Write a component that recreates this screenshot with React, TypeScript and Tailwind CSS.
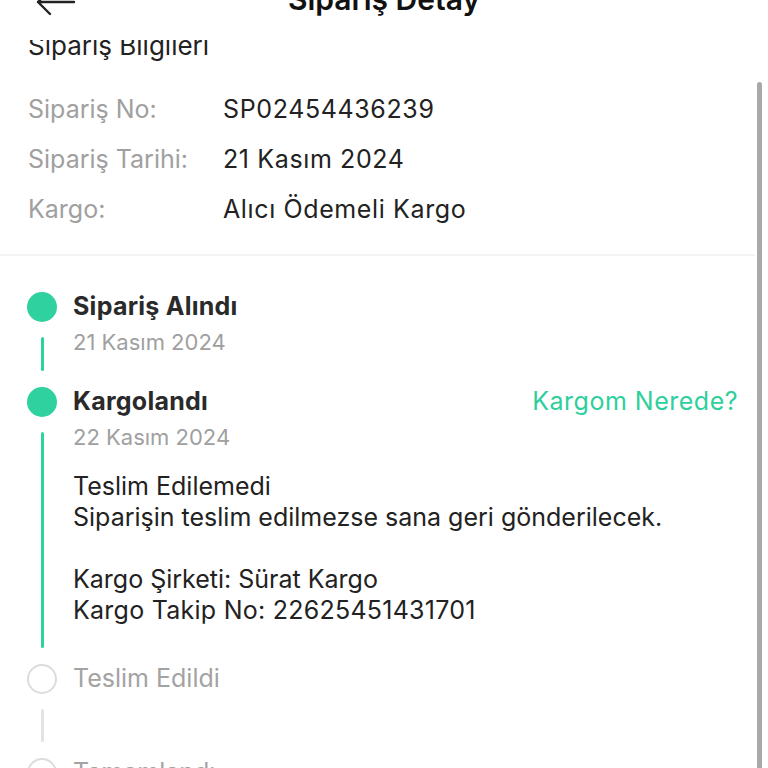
import React from "react";

const info = [
  { label: "Sipariş No:", value: "SP02454436239" },
  { label: "Sipariş Tarihi:", value: "21 Kasım 2024" },
  { label: "Kargo:", value: "Alıcı Ödemeli Kargo" },
];

function Dot({ active }: { active: boolean }) {
  return active ? (
    <span className="block h-[30px] w-[30px] shrink-0 rounded-full bg-[#2fd19e]" />
  ) : (
    <span className="block h-[30px] w-[30px] shrink-0 rounded-full border-2 border-[#dcdcdc] bg-white" />
  );
}

function Step({
  active,
  line,
  title,
  date,
  right,
  children,
  pad,
}: {
  active: boolean;
  line?: "green" | "gray";
  title: string;
  date?: string;
  right?: string;
  children?: React.ReactNode;
  pad?: string;
}) {
  return (
    <div className="flex gap-[16px]">
      <div className="flex w-[30px] flex-col items-center">
        <Dot active={active} />
        {line && (
          <span
            className={
              "mb-[16px] mt-[15px] w-[3px] flex-1 rounded-full " +
              (line === "green" ? "bg-[#2fd19e]" : "bg-[#e3e3e3]")
            }
          />
        )}
      </div>
      <div className={"flex-1 " + (pad ?? "")}>
        <div className="flex h-[30px] items-center justify-between">
          <span
            className={
              active
                ? "text-[25px] font-bold tracking-[0.01em] text-[#2a2a2a]"
                : "text-[25px] text-[#a3a3a3]"
            }
          >
            {title}
          </span>
          {right && <span className="text-[25px] tracking-[0.02em] text-[#2fcf9c]">{right}</span>}
        </div>
        {date && (
          <div className="mt-[6px] text-[22px] leading-[28px] text-[#a0a0a0]">{date}</div>
        )}
        {children}
      </div>
    </div>
  );
}

export default function App() {
  return (
    <div className="relative flex h-[768px] w-[768px] flex-col overflow-hidden bg-white font-['Inter','Noto_Sans',sans-serif] text-[#222]">
      {/* header */}
      <div className="relative flex h-[40px] shrink-0 items-start justify-center">
        <svg className="absolute left-[32px] -top-[14px]" width="48" height="32" viewBox="0 0 48 32" fill="none">
          <path d="M6 16H42M6 16L18 4M6 16L18 28" stroke="#222" strokeWidth="2.4" strokeLinecap="round" />
        </svg>
        <span className="-mt-[21px] text-[30px] font-semibold leading-[40px] text-[#111]">Sipariş Detay</span>
      </div>

      {/* scroll area */}
      <div className="flex-1 overflow-hidden">
        <div className="px-[28px]">
          <div className="-mt-[9px] text-[26px] leading-[30px] text-[#222]">Sipariş Bilgileri</div>
          <div className="mt-[24px] pb-[19px]">
            {info.map((r) => (
              <div key={r.label} className="flex h-[50px] items-center">
                <span className="w-[195px] text-[25px] text-[#a0a0a0]">{r.label}</span>
                <span className="text-[25px] tracking-[0.025em] text-[#222]">{r.value}</span>
              </div>
            ))}
          </div>
        </div>
        <div className="h-[2px] w-[755px] bg-[#f3f3f3]" />

        {/* timeline */}
        <div className="pl-[27px] pr-[30px] pt-[36px]">
          <Step active line="green" title="Sipariş Alındı" date="21 Kasım 2024" pad="pb-[31px]" />
          <Step
            active
            line="green"
            title="Kargolandı"
            date="22 Kasım 2024"
            right="Kargom Nerede?"
            pad="pb-[38px]"
          >
            <div className="mt-[20px] text-[25px] leading-[31px] text-[#222]">
              <div>Teslim Edilemedi</div>
              <div>Siparişin teslim edilmezse sana geri gönderilecek.</div>
              <div className="h-[31px]" />
              <div>Kargo Şirketi: Sürat Kargo</div>
              <div className="tracking-[0.01em]">Kargo Takip No: 22625451431701</div>
            </div>
          </Step>
          <Step active={false} line="gray" title="Teslim Edildi" pad="h-[94px]" />
          <Step active={false} title="Tamamlandı" />
        </div>
      </div>

      {/* scrollbar */}
      <div className="absolute right-[6px] top-[82px] h-[700px] w-[5px] rounded-full bg-[#a9a9a9]" />
    </div>
  );
}
